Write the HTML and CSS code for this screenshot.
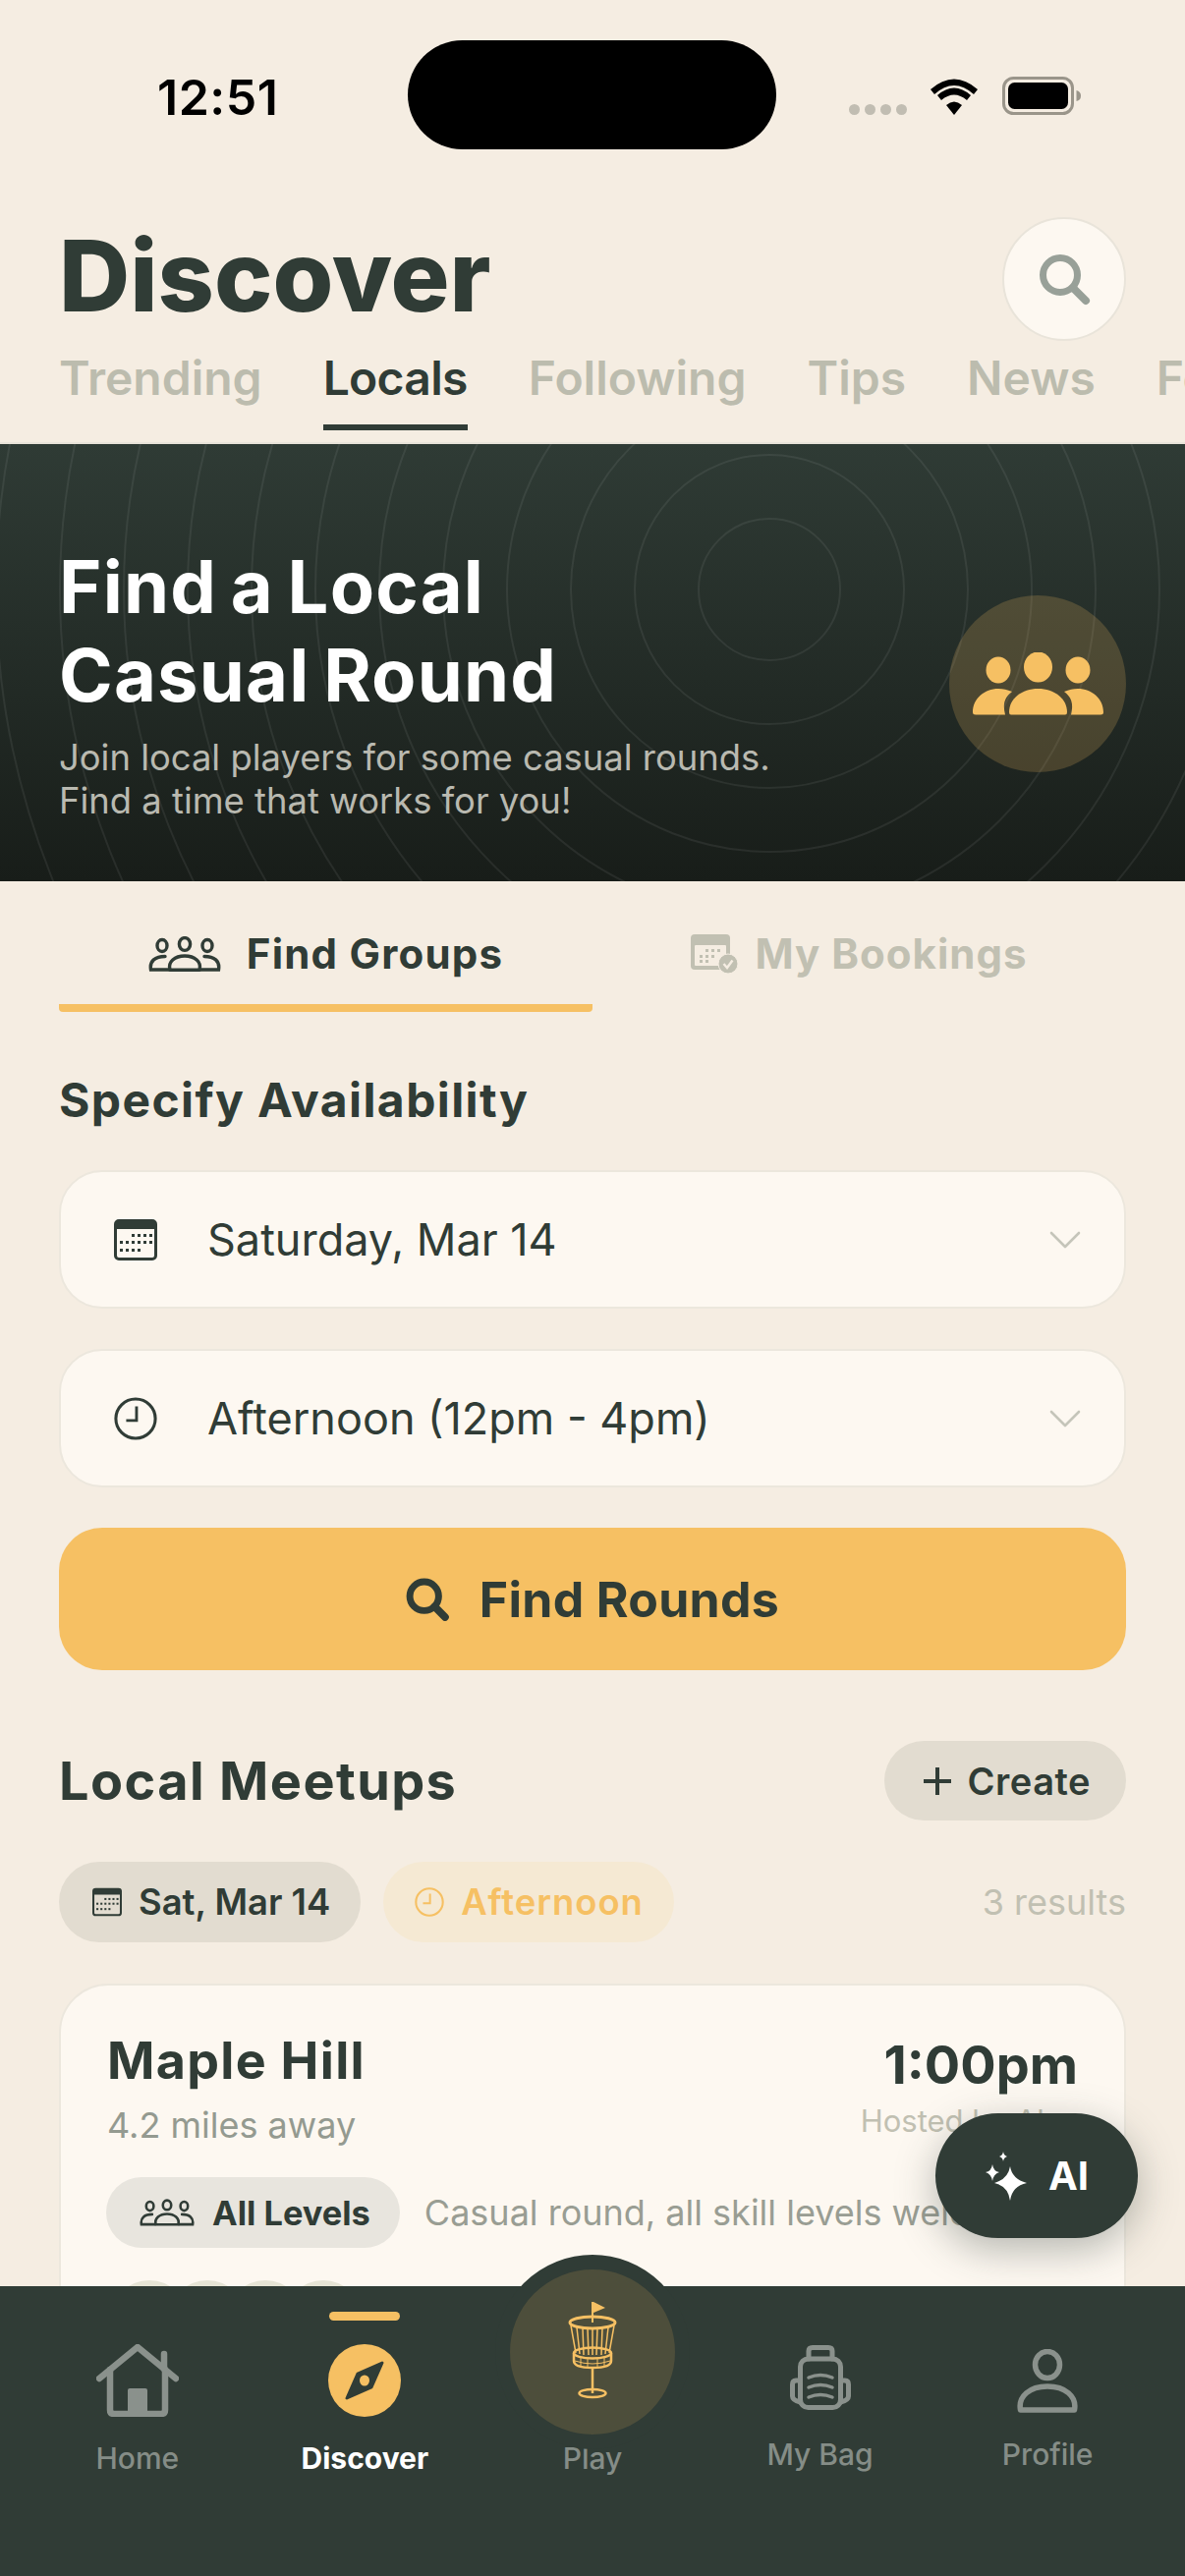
FILE: index.html
```html
<!DOCTYPE html>
<html lang="en">
<head>
    <meta charset="UTF-8">
    <meta name="viewport" content="width=device-width, initial-scale=1.0">
    <title>Discover</title>
    <link rel="stylesheet" href="styles.css">
</head>
<body>
    <svg class="icon-defs" aria-hidden="true">
        <symbol id="i-search" viewBox="0 0 54 54">
            <circle cx="23" cy="23" r="17.5" fill="none" stroke="currentColor" stroke-width="7"/>
            <path d="M36 36L49 49" fill="none" stroke="currentColor" stroke-width="8" stroke-linecap="round"/>
        </symbol>
        <symbol id="i-search-bold" viewBox="0 0 54 54">
            <circle cx="23" cy="23" r="18" fill="none" stroke="currentColor" stroke-width="8.500"/>
            <path d="M36 36L49 49" fill="none" stroke="currentColor" stroke-width="9.500" stroke-linecap="round"/>
        </symbol>
        <symbol id="i-people" viewBox="0 0 74 36">
            <g fill="none" stroke="currentColor" stroke-width="3.4">
                <ellipse cx="14" cy="9.5" rx="5" ry="6"/>
                <ellipse cx="37" cy="8" rx="5.6" ry="6.4"/>
                <ellipse cx="60" cy="9.5" rx="5" ry="6"/>
                <path d="M21 34H2.5C1 25 7 20.5 17 20.5" stroke-linecap="round"/>
                <path d="M53 34H71.500C73 25 67 20.5 57 20.5" stroke-linecap="round"/>
                <path d="M22 34.200C19.500 26 27 20 37 20C47 20 54.500 26 52 34.200Z" stroke-linejoin="round"/>
            </g>
        </symbol>
        <symbol id="i-calendar" viewBox="0 0 44 42">
            <rect x="1.500" y="1.500" width="41" height="39" rx="3.500" fill="none" stroke="currentColor" stroke-width="3"/>
            <path d="M3 1.500H41Q43 1.500 43 4V10H1V4Q1 1.500 3 1.500Z" fill="currentColor"/>
            <g fill="currentColor">
                <rect x="18" y="15" width="3" height="3"/><rect x="24" y="15" width="3" height="3"/><rect x="30" y="15" width="3" height="3"/><rect x="36" y="15" width="3" height="3"/>
                <rect x="6" y="22" width="3" height="3"/><rect x="12" y="22" width="3" height="3"/><rect x="18" y="22" width="3" height="3"/><rect x="24" y="22" width="3" height="3"/><rect x="30" y="22" width="3" height="3"/><rect x="36" y="22" width="3" height="3"/>
                <rect x="6" y="30" width="3" height="3"/><rect x="12" y="30" width="3" height="3"/><rect x="18" y="30" width="3" height="3"/><rect x="24" y="30" width="3" height="3"/>
            </g>
        </symbol>
        <symbol id="i-clock" viewBox="0 0 46 46">
            <circle cx="23" cy="23" r="21" fill="none" stroke="currentColor" stroke-width="3.200"/>
            <path d="M24 10V25H13" fill="none" stroke="currentColor" stroke-width="3"/>
        </symbol>
        <symbol id="i-chevron" viewBox="0 0 32 18">
            <path d="M2 2L16 16L30 2" fill="none" stroke="currentColor" stroke-width="2.600" stroke-linecap="round" stroke-linejoin="round"/>
        </symbol>
    </svg>

    <div class="screen">
        <div class="status-bar">
            <span class="status-time">12:51</span>
            <div class="island"></div>
            <div class="status-icons">
                <div class="signal"><i></i><i></i><i></i><i></i></div>
                <svg class="wifi" viewBox="0 0 50 38">
                    <path d="M25 38L17 28Q25 21 33 28Z" fill="#000"/>
                    <path d="M12 22Q25 11 38 22L42 17Q25 2 8 17Z" fill="#000" transform="translate(0 1)"/>
                    <path d="M1 10L5 15Q25 -3 45 15L49 10Q25 -11 1 10Z" fill="#000" transform="translate(0 2)"/>
                </svg>
                <svg class="battery" viewBox="0 0 80 39">
                    <rect x="1.500" y="1.500" width="70" height="36" rx="10" fill="none" stroke="#9a958a" stroke-width="3"/>
                    <rect x="6" y="6" width="61" height="27" rx="6.500" fill="#000"/>
                    <path d="M75.500 14Q80 15 80 19.500Q80 24 75.500 25Z" fill="#9a958a"/>
                </svg>
            </div>
        </div>

        <header class="page-header">
            <h1>Discover</h1>
            <button class="search-btn"><svg><use href="#i-search"/></svg></button>
        </header>

        <nav class="top-tabs">
            <a>Trending</a>
            <a class="active">Locals</a>
            <a>Following</a>
            <a>Tips</a>
            <a>News</a>
            <a>Forum</a>
        </nav>

        <section class="hero">
            <svg class="hero-rings" viewBox="0 0 1206 445">
                <g fill="none" stroke="#fff" stroke-opacity="0.07" stroke-width="2">
                    <circle cx="783" cy="148" r="72"/>
                    <circle cx="783" cy="148" r="137"/>
                    <circle cx="783" cy="148" r="202"/>
                    <circle cx="783" cy="148" r="267"/>
                    <circle cx="783" cy="148" r="332"/>
                    <circle cx="783" cy="148" r="397"/>
                    <circle cx="783" cy="148" r="462"/>
                    <circle cx="783" cy="148" r="527"/>
                    <circle cx="783" cy="148" r="592"/>
                    <circle cx="783" cy="148" r="657"/>
                    <circle cx="783" cy="148" r="722"/>
                    <circle cx="783" cy="148" r="787"/>
                    <circle cx="783" cy="148" r="852"/>
                </g>
            </svg>
            <div class="hero-text">
                <h2>Find a Local<br>Casual Round</h2>
                <p>Join local players for some casual rounds.<br>Find a time that works for you!</p>
            </div>
            <div class="hero-badge">
                <svg viewBox="0 0 133 64">
                    <g fill="#f6c063">
                        <ellipse cx="26" cy="18" rx="12.500" ry="13.500"/>
                        <ellipse cx="66.500" cy="15" rx="14.500" ry="15.500"/>
                        <ellipse cx="107" cy="18" rx="12.500" ry="13.500"/>
                        <path d="M39 63.500Q37 63.500 37 61C37 47 50 37 66.500 37C83 37 96 47 96 61Q96 63.500 94 63.500Z"/>
                        <path id="hero-side" d="M0 61C0 47 12 37 26 37C31 37 35 38 40 40C33 45 30 52 33 63.500H3Q0 63.500 0 61Z"/>
                        <use href="#hero-side" transform="translate(133 0) scale(-1 1)"/>
                    </g>
                </svg>
            </div>
        </section>

        <div class="sub-tabs">
            <a class="sub-tab active"><svg class="sub-icon-people"><use href="#i-people"/></svg>Find Groups</a>
            <a class="sub-tab sub-tab-bookings">
                <svg class="sub-icon-booking" viewBox="0 0 48 40">
                    <rect width="40" height="36" rx="4" fill="#c1c0b2"/>
                    <rect x="4" y="11" width="32" height="21" rx="1" fill="#f5ede2"/>
                    <g fill="#c1c0b2">
                        <rect x="15" y="15" width="3" height="3"/><rect x="21" y="15" width="3" height="3"/><rect x="27" y="15" width="3" height="3"/>
                        <rect x="9" y="21" width="3" height="3"/><rect x="15" y="21" width="3" height="3"/><rect x="21" y="21" width="3" height="3"/>
                        <rect x="9" y="26" width="3" height="3"/><rect x="15" y="26" width="3" height="3"/>
                    </g>
                    <circle cx="38" cy="30" r="10" fill="#c1c0b2" stroke="#f5ede2" stroke-width="1"/>
                    <path d="M33.500 30L37 34L42.500 26.500" fill="none" stroke="#f5ede2" stroke-width="2.400"/>
                </svg>
                My Bookings
            </a>
        </div>

        <section class="availability">
            <h3>Specify Availability</h3>
            <div class="select-field">
                <svg class="field-icon"><use href="#i-calendar"/></svg>
                <span>Saturday, Mar 14</span>
                <svg class="chevron"><use href="#i-chevron"/></svg>
            </div>
            <div class="select-field">
                <svg class="field-icon"><use href="#i-clock"/></svg>
                <span>Afternoon (12pm - 4pm)</span>
                <svg class="chevron"><use href="#i-chevron"/></svg>
            </div>
            <button class="find-btn"><svg><use href="#i-search-bold"/></svg>Find Rounds</button>
        </section>

        <section class="meetups">
            <div class="meetups-head">
                <h3>Local Meetups</h3>
                <button class="create-btn"><span class="plus"></span>Create</button>
            </div>
            <div class="filter-row">
                <span class="chip"><svg><use href="#i-calendar"/></svg>Sat, Mar 14</span>
                <span class="chip chip-time"><svg><use href="#i-clock"/></svg>Afternoon</span>
                <span class="results">3 results</span>
            </div>
            <article class="card">
                <div class="card-top">
                    <div>
                        <h4>Maple Hill</h4>
                        <p class="distance">4.2 miles away</p>
                    </div>
                    <div class="card-time">
                        <strong>1:00pm</strong>
                        <p>Hosted by Alex</p>
                    </div>
                </div>
                <div class="card-info">
                    <span class="level"><svg><use href="#i-people"/></svg>All Levels</span>
                    <span class="note">Casual round, all skill levels welcome</span>
                </div>
                <div class="avatars"><i></i><i></i><i></i><i></i></div>
            </article>
        </section>

        <button class="ai-btn">
            <svg viewBox="0 0 42 50">
                <g fill="#fff">
                    <path d="M25 15Q27 28 42 32Q27 35 25 50Q23 35 9 32Q23 28 25 15Z"/>
                    <path d="M7 13Q8 20 14 21Q8 23 7 30Q6 23 0 21Q6 20 7 13Z"/>
                    <path d="M18 0Q18.500 4 22 5Q18.500 6 18 10Q17.500 6 14 5Q17.500 4 18 0Z"/>
                </g>
            </svg>
            AI
        </button>

        <nav class="bottom-nav">
            <a class="nav-item">
                <svg class="nav-icon" viewBox="0 0 84 74">
                    <g fill="none" stroke="#8a918c" stroke-width="6.500" stroke-linecap="round" stroke-linejoin="round">
                        <path d="M3 35L42 3L81 35"/>
                        <path d="M14 26V67Q14 71 18 71H66Q70 71 70 67V26"/>
                        <path d="M69 10V25"/>
                    </g>
                    <path d="M32 72V47Q32 45 34 45H50Q52 45 52 47V72Z" fill="#8a918c"/>
                </svg>
                <span>Home</span>
            </a>
            <a class="nav-item active">
                <i class="nav-marker"></i>
                <svg class="nav-icon" viewBox="0 0 74 74">
                    <circle cx="37" cy="37" r="37" fill="#f6c063"/>
                    <path d="M55 19L30 30L19 55L44 44Z" fill="#303c36" stroke="#303c36" stroke-width="3" stroke-linejoin="round"/>
                    <ellipse cx="37" cy="37" rx="5" ry="5.500" fill="#f6c063"/>
                </svg>
                <span>Discover</span>
            </a>
            <a class="nav-item nav-play">
                <div class="play-disc">
                    <svg viewBox="0 0 50 100">
                        <g fill="none" stroke="#f6c063">
                            <path d="M25 0V21" stroke-width="2"/>
                            <ellipse cx="25" cy="21" rx="23" ry="6" stroke-width="3"/>
                            <path d="M3 24L8 52M9 26L12 53M15 27L16 54M20 27L21 54M25 27V54M30 27L29 54M35 27L34 54M41 26L38 53M47 24L42 52" stroke-width="1.500"/>
                            <ellipse cx="25" cy="52" rx="19" ry="5.500" stroke-width="2.500"/>
                            <path d="M6 52V60Q6 67 25 67Q44 67 44 60V52" stroke-width="2.500"/>
                            <path d="M7 60Q25 66 43 60M13 57V66M20 58V67M30 58V67M37 57V66" stroke-width="1"/>
                            <path d="M25 67V93" stroke-width="2.500"/>
                            <ellipse cx="25" cy="93" rx="13.500" ry="4" stroke-width="2.500"/>
                        </g>
                        <path d="M26 0L38 6L26 11Z" fill="#f6c063"/>
                    </svg>
                </div>
                <span>Play</span>
            </a>
            <a class="nav-item nav-bag">
                <svg class="nav-icon" viewBox="0 0 62 66">
                    <g fill="none" stroke="#8a918c" stroke-width="5" stroke-linejoin="round" stroke-linecap="round">
                        <path d="M19 14V6Q19 2.500 23 2.500H39Q43 2.500 43 6V14"/>
                        <rect x="10.500" y="14" width="41" height="49.500" rx="8"/>
                        <path d="M10.500 36H6Q2.500 36 2.500 40V52Q2.500 56 10.500 58"/>
                        <path d="M51.500 36H56Q59.500 36 59.500 40V52Q59.500 56 51.500 58"/>
                    </g>
                    <g fill="none" stroke="#8a918c" stroke-width="3.500" stroke-linecap="round">
                        <path d="M19 33Q31 28 43 33"/>
                        <path d="M19 43Q31 38 43 43"/>
                        <path d="M19 53Q31 48 43 53"/>
                    </g>
                </svg>
                <span>My Bag</span>
            </a>
            <a class="nav-item nav-profile">
                <svg class="nav-icon" viewBox="0 0 62 65">
                    <g fill="none" stroke="#8a918c" stroke-width="5.500" stroke-linejoin="round">
                        <ellipse cx="31" cy="16" rx="12.500" ry="13.500"/>
                        <path d="M3.500 62C1 48 13 38 31 38C49 38 61 48 58.500 62Z"/>
                    </g>
                </svg>
                <span>Profile</span>
            </a>
        </nav>
    </div>
</body>
</html>
```

FILE: styles.css
```css
* {
    box-sizing: border-box;
}

body {
    margin: 0;
    background-color: #f5ede2;
    font-family: Inter, "Liberation Sans", sans-serif;
    color: #303c36;
}

h1, h2, h3, h4, p {
    margin: 0;
}

button {
    border: none;
    font-family: inherit;
    color: inherit;
}

svg {
    display: block;
    flex-shrink: 0;
}

.icon-defs {
    display: none;
}

.screen {
    position: relative;
    width: 1206px;
    height: 2622px;
    overflow: hidden;
}

/* status bar */
.status-bar {
    display: flex;
    align-items: flex-start;
    height: 221px;
    padding: 41px 106px 0 160px;
}

.status-time {
    width: 255px;
    margin-top: 29px;
    font-size: 50px;
    line-height: 58px;
    font-weight: 600;
    letter-spacing: 0.5px;
    color: #000;
}

.island {
    width: 376px;
    height: 111px;
    border-radius: 56px;
    background-color: #000;
}

.status-icons {
    display: flex;
    align-items: flex-start;
    margin: 37px 0 0 74px;
}

.signal {
    display: flex;
    gap: 5px;
    margin: 28px 23px 0 0;
}

.signal i {
    width: 11px;
    height: 11px;
    border-radius: 50%;
    background-color: #c1bdb2;
}

.wifi {
    width: 50px;
    height: 38px;
    margin: 1px 24px 0 0;
}

.battery {
    width: 80px;
    height: 39px;
}

/* header + top tabs */
.page-header {
    display: flex;
    justify-content: space-between;
    align-items: center;
    height: 126px;
    padding: 0 60px;
}

.page-header h1 {
    padding-bottom: 6px;
    font-size: 100px;
    line-height: 120px;
    font-weight: 800;
}

.search-btn {
    display: flex;
    align-items: center;
    justify-content: center;
    width: 126px;
    height: 126px;
    border-radius: 50%;
    border: 2px solid #e9e4da;
    background-color: #fdf8f1;
    color: #98a098;
}

.search-btn svg {
    width: 54px;
    height: 54px;
}

.top-tabs {
    display: flex;
    gap: 62px;
    height: 105px;
    padding: 9px 0 0 60px;
    border-bottom: 2px solid #e9e4da;
    white-space: nowrap;
    overflow: hidden;
}

.top-tabs a {
    flex-shrink: 0;
    height: 82px;
    font-size: 48px;
    line-height: 58px;
    font-weight: 600;
    color: #bcbcae;
}

.top-tabs a.active {
    border-bottom: 6px solid #303c36;
    letter-spacing: -0.7px;
    color: #303c36;
}

/* hero */
.hero {
    position: relative;
    display: flex;
    justify-content: space-between;
    align-items: flex-start;
    height: 445px;
    padding: 100px 60px 0;
    background: linear-gradient(#2f3b35, #181d19);
}

.hero-rings {
    position: absolute;
    top: 0;
    left: 0;
    width: 1206px;
    height: 445px;
}

.hero-text {
    position: relative;
}

.hero-text h2 {
    font-size: 74px;
    line-height: 90px;
    font-weight: 700;
    letter-spacing: 1.2px;
    word-spacing: -5px;
    color: #fff;
}

.hero-text p {
    margin-top: 17px;
    font-size: 36.4px;
    line-height: 44px;
    color: #b9b9b0;
}

.hero-badge {
    position: relative;
    display: flex;
    align-items: center;
    justify-content: center;
    width: 180px;
    height: 180px;
    margin-top: 54px;
    border-radius: 50%;
    background-color: rgba(246, 192, 99, 0.2);
}

.hero-badge svg {
    width: 133px;
    height: 64px;
}

/* find groups / my bookings */
.sub-tabs {
    display: grid;
    grid-template-columns: 1fr 1fr;
    padding: 0 60px;
}

.sub-tab {
    display: flex;
    align-items: center;
    justify-content: center;
    gap: 26px;
    height: 133px;
    padding-top: 22px;
    border-bottom: 8px solid transparent;
    font-size: 42px;
    font-weight: 700;
    letter-spacing: 1.2px;
    color: #c1c0b2;
}

.sub-tab.active {
    border-bottom-color: #f6c063;
    border-radius: 0 0 4px 4px;
    color: #303c36;
}

.sub-tab-bookings {
    gap: 17px;
    letter-spacing: 1px;
}

.sub-icon-people {
    width: 74px;
    height: 36px;
}

.sub-icon-booking {
    width: 48px;
    height: 40px;
}

/* availability */
.availability {
    padding: 0 60px;
}

.availability h3 {
    margin: 60px 0 41px;
    font-size: 48px;
    line-height: 60px;
    font-weight: 700;
    letter-spacing: 1.4px;
}

.select-field {
    display: flex;
    align-items: center;
    height: 141px;
    margin-bottom: 41px;
    padding: 0 44px 0 54px;
    border: 2px solid #ece7dd;
    border-radius: 44px;
    background-color: #fdf8f1;
    font-size: 45px;
}

.field-icon {
    width: 44px;
    height: 44px;
    margin-right: 51px;
}

.select-field span {
    flex: 1;
}

.chevron {
    width: 32px;
    height: 18px;
    color: #c5c5ba;
}

.find-btn {
    display: flex;
    align-items: center;
    justify-content: center;
    gap: 31px;
    width: 100%;
    height: 145px;
    border-radius: 44px;
    background-color: #f6c063;
    font-size: 50px;
    font-weight: 700;
    letter-spacing: 0.3px;
}

.find-btn svg {
    width: 44px;
    height: 44px;
}

/* meetups */
.meetups {
    padding: 72px 60px 0;
}

.meetups-head {
    display: flex;
    justify-content: space-between;
    align-items: center;
}

.meetups-head h3 {
    font-size: 54px;
    font-weight: 700;
    letter-spacing: 1.4px;
}

.create-btn {
    display: flex;
    align-items: center;
    gap: 17px;
    height: 81px;
    padding: 0 36px 0 40px;
    border-radius: 41px;
    background-color: #e2dcd0;
    font-size: 38px;
    font-weight: 600;
    letter-spacing: 0.5px;
}

.plus {
    position: relative;
    width: 28px;
    height: 28px;
    background: linear-gradient(#303c36, #303c36) center / 100% 4px no-repeat,
        linear-gradient(#303c36, #303c36) center / 4px 100% no-repeat;
}

.filter-row {
    display: flex;
    align-items: center;
    gap: 23px;
    margin-top: 42px;
}

.chip {
    display: flex;
    align-items: center;
    gap: 17px;
    height: 82px;
    padding: 0 31px 0 34px;
    border-radius: 41px;
    background-color: #e2dcd0;
    font-size: 36.4px;
    font-weight: 600;
}

.chip svg {
    width: 30px;
    height: 30px;
}

.chip-time {
    padding-left: 32px;
    letter-spacing: 1px;
    background-color: #f5e9d3;
    color: #f6c063;
}

.results {
    margin-left: auto;
    font-size: 36px;
    color: #c1c0b2;
}

.card {
    height: 600px;
    margin-top: 42px;
    padding: 45px 47px 0 46px;
    border: 2px solid #ece7dd;
    border-radius: 50px;
    background-color: #fdf8f1;
}

.card-top {
    display: flex;
    justify-content: space-between;
    padding-left: 1px;
}

.card h4 {
    font-size: 52px;
    line-height: 64px;
    font-weight: 700;
    letter-spacing: 1.3px;
}

.distance {
    margin-top: 9px;
    font-size: 36px;
    line-height: 48px;
    color: #949a90;
}

.card-time {
    text-align: right;
}

.card-time strong {
    display: block;
    margin-top: 4px;
    font-size: 54px;
    line-height: 64px;
    font-weight: 700;
}

.card-time p {
    margin-top: 5px;
    font-size: 31px;
    line-height: 40px;
    color: #c1c0b2;
}

.card-info {
    display: flex;
    align-items: center;
    gap: 25px;
    margin-top: 29px;
    white-space: nowrap;
}

.level {
    display: flex;
    align-items: center;
    gap: 18px;
    height: 72px;
    padding: 0 30px 0 34px;
    border-radius: 36px;
    background-color: #e8e5de;
    font-size: 34.4px;
    font-weight: 700;
}

.level svg {
    width: 56px;
    height: 28px;
}

.note {
    font-size: 36px;
    color: #999d93;
}

.avatars {
    display: flex;
    margin: 33px 0 0 4px;
}

.avatars i {
    flex-shrink: 0;
    width: 80px;
    height: 80px;
    margin-right: -21px;
    border-radius: 50%;
    background-color: #e6e4d5;
}

/* floating AI button */
.ai-btn {
    position: absolute;
    top: 2151px;
    left: 952px;
    display: flex;
    align-items: center;
    gap: 22px;
    width: 206px;
    height: 127px;
    padding-left: 51px;
    border-radius: 64px;
    background-color: #303c36;
    box-shadow: 0 12px 40px rgba(48, 60, 54, 0.35);
    font-size: 40px;
    font-weight: 700;
    color: #fff;
}

.ai-btn svg {
    width: 42px;
    height: 50px;
}

/* bottom nav */
.bottom-nav {
    position: absolute;
    left: 0;
    bottom: 0;
    display: flex;
    width: 1206px;
    height: 295px;
    padding: 59px 24px 0;
    background-color: #303c36;
}

.nav-item {
    position: relative;
    flex: 1;
    display: flex;
    flex-direction: column;
    align-items: center;
    font-size: 30px;
    font-weight: 500;
    color: #858d87;
}

.nav-icon {
    height: 74px;
    margin-bottom: 24px;
}

.nav-item span {
    line-height: 36px;
}

.nav-item.active {
    font-weight: 700;
    color: #fff;
}

.nav-marker {
    position: absolute;
    top: -33px;
    width: 72px;
    height: 9px;
    border-radius: 5px;
    background-color: #f6c063;
}

.nav-play {
    padding-top: 98px;
}

.play-disc {
    position: absolute;
    top: -91px;
    display: flex;
    justify-content: center;
    width: 198px;
    height: 198px;
    border: 15px solid #303c36;
    border-radius: 50%;
    background-color: #4d4e3b;
}

.play-disc svg {
    width: 50px;
    height: 100px;
    margin-top: 33px;
}

.nav-bag .nav-icon {
    height: 66px;
    margin: 1px 0 27px;
}

.nav-profile .nav-icon {
    height: 65px;
    margin: 5px 0 24px;
}
```
